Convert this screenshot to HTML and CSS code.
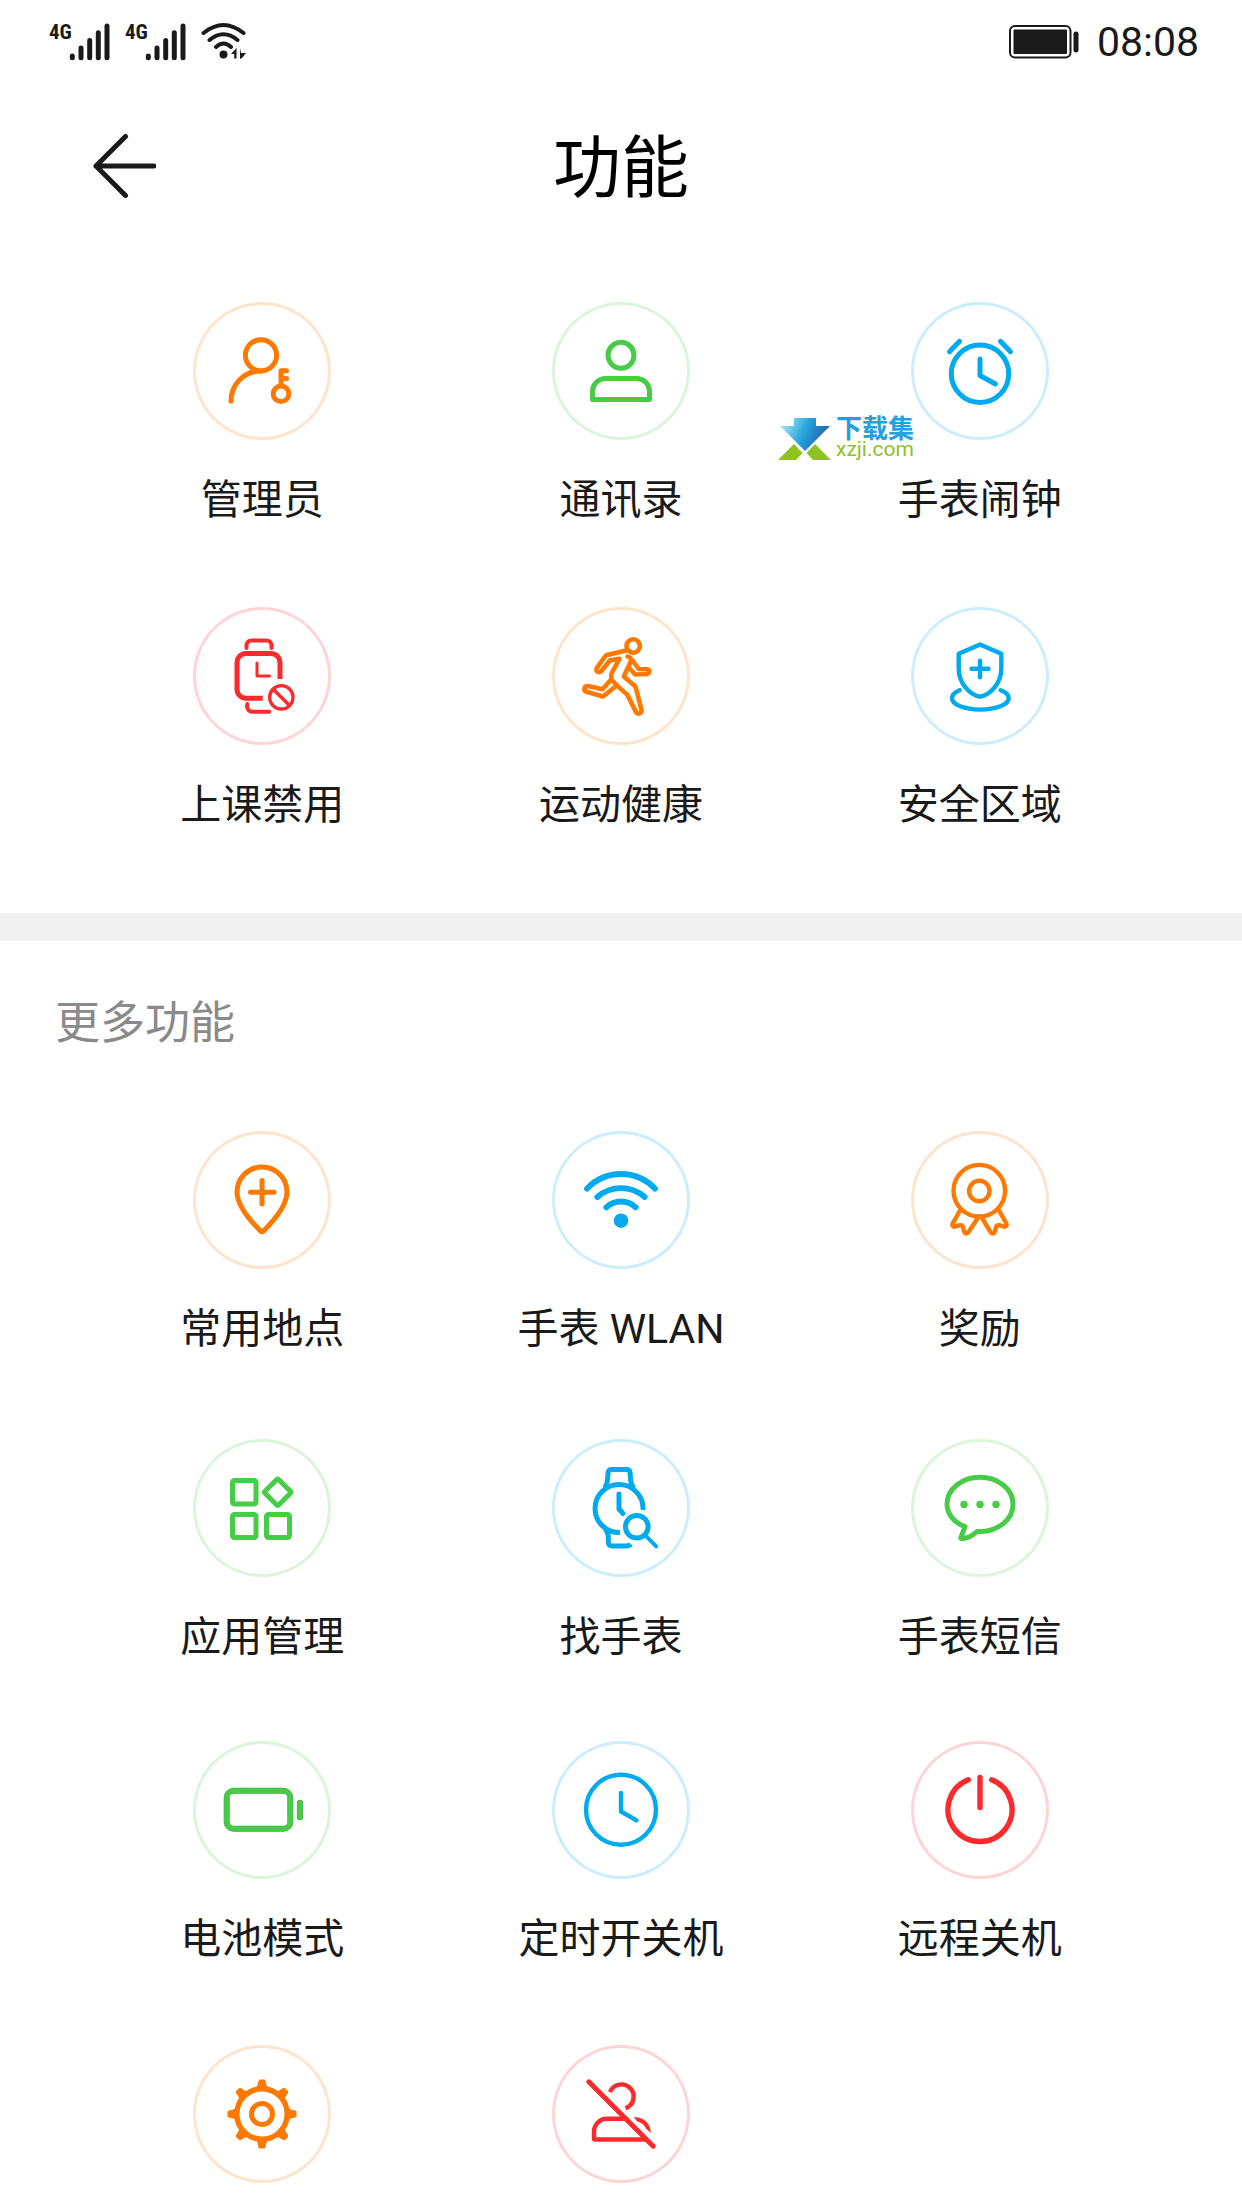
FILE: index.html
```html
<!DOCTYPE html>
<html lang="zh-CN">
<head>
<meta charset="utf-8">
<meta name="viewport" content="width=device-width, initial-scale=1">
<title>功能</title>
<link rel="stylesheet" href="styles.css">
</head>
<body>
<div class="status-bar">
  <div class="status-group">
    <svg class="signal" viewBox="0 0 62 40" role="img" aria-label="4G 信号">
      <text class="signal-text" x="0" y="17">4G</text>
      <path d="M23.3 34v1.7M32 26v9.7M40.7 18.500v17.200M49.300 10.700v25M58 4v31.700"/>
    </svg>
    <svg class="signal" viewBox="0 0 62 40" role="img" aria-label="4G 信号">
      <text class="signal-text" x="0" y="17">4G</text>
      <path d="M23.3 34v1.7M32 26v9.7M40.7 18.500v17.200M49.300 10.700v25M58 4v31.700"/>
    </svg>
    <svg class="wlan" viewBox="0 0 46 40" role="img" aria-label="WLAN">
      <path class="wlan-arc" d="M2.500 11Q22.500-5 42.500 11M8.500 18Q22.500 6.500 36.500 18M15 25Q22.500 18 30 25"/>
      <circle cx="22.500" cy="32.500" r="4"/>
      <path d="M30 32l5.500-6v10.500h-2.300v-4.500zM39 26l1 5h5l-4 5-2 1z"/>
    </svg>
  </div>
  <div class="status-group status-right">
    <svg class="power-level" viewBox="0 0 70 34" role="img" aria-label="电量">
      <rect class="power-case" x="1" y="1" width="60.500" height="31.500" rx="5"/>
      <rect x="4.500" y="4.500" width="53.500" height="24.500" rx="1"/>
      <rect x="64.500" y="6.500" width="5" height="21" rx="2.500"/>
    </svg>
    <time>08:08</time>
  </div>
</div>

<header class="header">
  <button class="back" type="button" aria-label="返回">
    <svg viewBox="0 0 64 64"><path d="M33.500 2.500L4 32l29.500 29.500M4 32h58"/></svg>
  </button>
  <h1 class="title">功能</h1>
</header>

<main>
  <section class="main-features">
    <ul class="grid">
      <li><a class="item orange" href="#admin">
        <svg class="icon" viewBox="0 0 138 138">
          <circle cx="68" cy="53.300" r="15.600"/><path d="M38 99.300C38 82 51 69 68 69M88 81V68.700h5.500M88 76.500h5.500"/><circle cx="88" cy="91.700" r="7.800"/>
        </svg>
        <span class="label">管理员</span></a></li>
      <li><a class="item green" href="#contacts">
        <svg class="icon" viewBox="0 0 138 138">
          <circle cx="69" cy="53.300" r="13"/><path d="M40.500 97.500v-8a13 13 0 0 1 13-13h31a13 13 0 0 1 13 13v8z"/>
        </svg>
        <span class="label">通讯录</span></a></li>
      <li><a class="item blue" href="#alarm">
        <svg class="icon" viewBox="0 0 138 138">
          <circle cx="69" cy="71.700" r="28.700"/><path d="M69 57v16.500l15.400 8.500M38.500 49.700l10-10.400M99.500 49.700l-10-10.400"/>
        </svg>
        <span class="label">手表闹钟</span></a></li>
      <li><a class="item red" href="#class-mode">
        <svg class="icon" viewBox="0 0 138 138">
          <path stroke-width="4" d="M53.500 41v-2.500a5 5 0 0 1 5-5h15a5 5 0 0 1 5 5V41M54.200 97v2.700a5 5 0 0 0 5 5h17"/>
          <path class="flat" d="M87 72V56a9 9 0 0 0-9-9.500H53a9 9 0 0 0-9 9.500v26a9 9 0 0 0 9 9.300h16.700"/>
          <path stroke-width="3" d="M64 56v13h12.500"/>
          <circle stroke-width="3.300" cx="88.300" cy="90.300" r="11.700"/><path stroke-width="3.300" d="M80.500 82.500l16 16"/>
        </svg>
        <span class="label">上课禁用</span></a></li>
      <li><a class="item orange" href="#sport">
        <svg class="icon" viewBox="0 0 138 138">
          <g stroke-width="4.600">
            <circle cx="81.200" cy="39" r="6.700"/>
            <path d="M74 43.500L55 48q-1.300.4-2 1.500L44.800 61q-1 2.500.8 3.800 2 1 3.600-.6l8.800-10.900 9.500-1.600L59.500 66.500l-.3 6-8.700 9.800-14.500-3.200q-3-.3-3.600 2.300-.4 2.400 2.100 3.400L51 89.500l11.500-9.300M59.200 72.500q9 9.500 16 15l9 18q1.600 1.800 3.600.8 2.200-1.300 1.700-3.300l-6-23.500-11.700-10L78.500 55q1.500-5-3-5.500M80.500 53.500L86.800 62l8.200.2q2.200.3 2.200 2.300t-2.300 2.500l-11.700.5-5-5.500"/>
          </g>
        </svg>
        <span class="label">运动健康</span></a></li>
      <li><a class="item blue" href="#safe-zone">
        <svg class="icon" viewBox="0 0 138 138">
          <g stroke-width="4.400">
            <path d="M69 37.500l21.300 9.200v15C90.300 75 80.500 87.500 69 89.700 57.500 87.500 47.700 75 47.700 61.700v-15zM69 53.700v16.600M60.500 61.800h17"/>
            <path d="M48.700 83.300C43.500 85.300 41 88 41 91.300c0 6.300 12.500 11.300 28.300 11.300s28.400-5 28.400-11.300c0-3.300-2.700-6-8-8"/>
          </g>
        </svg>
        <span class="label">安全区域</span></a></li>
    </ul>
  </section>

  <section class="more-features">
    <h2 class="section-title">更多功能</h2>
    <ul class="grid">
      <li><a class="item orange" href="#places">
        <svg class="icon" viewBox="0 0 138 138">
          <path d="M67.500 100C57 89.500 44 74 44 61a25 25 0 0 1 50 0c0 13-13 28.500-23.500 39q-1.500 1.200-3 0zM69 49.500v23.500M57.500 61.200h23.500"/>
        </svg>
        <span class="label">常用地点</span></a></li>
      <li><a class="item blue" href="#wlan">
        <svg class="icon" viewBox="0 0 138 138">
          <path stroke-width="5.800" d="M35 57.700a46.700 46.700 0 0 1 68 0M45.300 66a36 36 0 0 1 47.400 0M54.300 76.300a21.500 21.500 0 0 1 29.400 0"/><circle class="solid" cx="69" cy="89.700" r="7.200"/>
        </svg>
        <span class="label">手表 WLAN</span></a></li>
      <li><a class="item orange" href="#rewards">
        <svg class="icon" viewBox="0 0 138 138">
          <g stroke-width="4.400">
            <circle cx="68.300" cy="59.700" r="25.800"/><circle cx="68.300" cy="60" r="10.200"/>
            <path d="M49 79.500l-7.300 12.800q-1.400 3.700 2 3.400l5.500-1.600q2-.2 2.600 1.700l1.500 5.200q1.800 3 4 .3L67.500 86M88 79.500l7.300 12.800q1.400 3.700-2 3.400l-5.500-1.600q-2-.2-2.600 1.700l-1.500 5.200q-1.800 3-4 .3L70.500 86"/>
          </g>
        </svg>
        <span class="label">奖励</span></a></li>
      <li><a class="item green" href="#apps">
        <svg class="icon" viewBox="0 0 138 138">
          <rect x="39.500" y="41.500" width="23.500" height="23.500" rx="2"/><rect x="39.500" y="75.500" width="23.500" height="23" rx="2"/><rect x="73.500" y="75.500" width="23" height="23" rx="2"/>
          <path d="M83.800 40.500l-12 12q-.8.800 0 1.600l12 12q.9.800 1.800 0l12-12q.8-.8 0-1.600l-12-12q-.9-.8-1.800 0z"/>
        </svg>
        <span class="label">应用管理</span></a></li>
      <li><a class="item blue" href="#find">
        <svg class="icon" viewBox="0 0 138 138">
          <path class="flat" d="M91 71A24 24 0 1 0 68 93.500"/>
          <path class="flat" d="M52.500 49q2.700-3.500 3-8l.5-7q.3-3.500 3.800-3.500h14.500q3.500 0 3.800 3.500l.5 7q.3 4.500 3 8M52.800 90q3.200 2.500 3.500 7v6q.2 4 4 4h13.500q3.500 0 5-1.800"/>
          <path d="M67 55v15l4 4.500"/>
          <circle cx="84.800" cy="87.700" r="11.300"/><path stroke-width="4" d="M94.500 97.700l9.700 9.600"/>
        </svg>
        <span class="label">找手表</span></a></li>
      <li><a class="item green" href="#messages">
        <svg class="icon" viewBox="0 0 138 138">
          <path d="M54 87.700C43 83.500 36 75 36 65.300 36 50 51 38.200 69 38.200s33 11.800 33 27.100-15 27.200-33 27.200h-3c-4 4-9 6.500-15 7.300q-1.700 0-1-1.500z"/>
          <g class="solid"><circle cx="53" cy="65.500" r="3.700"/><circle cx="69" cy="65.500" r="3.700"/><circle cx="85" cy="65.500" r="3.700"/></g>
        </svg>
        <span class="label">手表短信</span></a></li>
      <li><a class="item green" href="#battery">
        <svg class="icon" viewBox="0 0 138 138">
          <rect class="edge" x="33.700" y="49.800" width="63.600" height="38" rx="7"/><rect x="33.700" y="49.800" width="63.600" height="38" rx="7"/>
          <path class="edge" d="M106.900 61.700v14.600"/><path d="M106.900 61.700v14.600"/>
        </svg>
        <span class="label">电池模式</span></a></li>
      <li><a class="item blue" href="#schedule">
        <svg class="icon" viewBox="0 0 138 138">
          <g stroke-width="4.400"><circle cx="69" cy="68.700" r="35"/><path d="M69 52v18.500l15.500 8.800"/></g>
        </svg>
        <span class="label">定时开关机</span></a></li>
      <li><a class="item red" href="#shutdown">
        <svg class="icon" viewBox="0 0 138 138">
          <path stroke-width="5.400" d="M57.300 38.700a32 32 0 1 0 23.400 0M69 36.500v30"/>
        </svg>
        <span class="label">远程关机</span></a></li>
      <li><a class="item orange" href="#settings" aria-label="设置">
        <svg class="icon" viewBox="0 0 138 138">
          <circle stroke-width="5.400" cx="69" cy="69" r="25.200"/><circle cx="69" cy="69" r="10.500"/>
          <g class="solid">
            <path id="tooth" d="M62 43.500q2.500-1 3.200-6.500.3-2.500 1.500-2.500h4.600q1.200 0 1.500 2.500.7 5.500 3.200 6.500z"/>
            <use href="#tooth" transform="rotate(45 69 69)"/><use href="#tooth" transform="rotate(90 69 69)"/><use href="#tooth" transform="rotate(135 69 69)"/><use href="#tooth" transform="rotate(180 69 69)"/><use href="#tooth" transform="rotate(225 69 69)"/><use href="#tooth" transform="rotate(270 69 69)"/><use href="#tooth" transform="rotate(315 69 69)"/>
          </g>
        </svg></a></li>
      <li><a class="item red" href="#block" aria-label="拒接陌生人">
        <svg class="icon" viewBox="0 0 138 138">
          <path d="M36.800 36.800l64.400 64.400"/>
          <g stroke-width="4.400">
            <path class="flat" d="M58 47a12.300 12.300 0 1 1 15.500 16.300"/>
            <path d="M74.500 73.700H55a13 13 0 0 0-13 13v7q0 .8.800.8h51.500"/>
          </g>
          <path class="solid" d="M81.500 72.200c10-.8 17.300 6 17.400 15.800l-5-4.500c-1.500-3.500-4.500-6-8.500-7z"/>
        </svg></a></li>
    </ul>
  </section>
</main>

<div class="watermark">
  <svg class="watermark-logo" viewBox="0 0 53 42" aria-hidden="true">
    <defs><linearGradient id="arrow" x1="0" y1="0.200" x2="1" y2="0.500"><stop offset="0.050" stop-color="#a5e0f5"/><stop offset="0.500" stop-color="#25a5de"/><stop offset="1" stop-color="#2a55a5"/></linearGradient></defs>
    <path fill="url(#arrow)" d="M16 0h22v8h14L27 33 2 8h14z"/>
    <path fill="#8fc31f" d="M0 42l16-16 8.500 9-6.500 7zM53 42L37 26l-8.500 9 6.500 7z"/>
  </svg>
  <div class="watermark-text"><span class="watermark-name">下载集</span><span class="watermark-site">xzji.com</span></div>
</div>
</body>
</html>
```
FILE: styles.css
```css
* {
  box-sizing: border-box;
}

body {
  position: relative;
  min-height: 100vh;
  margin: 0;
  background: #fff;
  color: #1a1a1a;
  font-family: Roboto, "Noto Sans CJK SC", "Noto Sans", sans-serif;
}

ul, h1, h2 {
  margin: 0;
  padding: 0;
}

/* Status bar */
.status-bar {
  display: flex;
  justify-content: space-between;
  align-items: center;
  height: 83px;
  padding: 0 43px 0 49px;
}

.status-group {
  display: flex;
  align-items: center;
  gap: 14px;
}

.status-right {
  gap: 18px;
}

.signal {
  width: 62px;
  height: 40px;
  fill: none;
  stroke: #1a1a1a;
  stroke-width: 5;
  stroke-linecap: round;
}

.signal-text {
  fill: #1a1a1a;
  stroke: none;
  font: bold 21px "Liberation Sans Narrow", "Roboto Condensed", Roboto, sans-serif;
}

.wlan {
  width: 46px;
  height: 40px;
  fill: #1a1a1a;
}

.wlan-arc {
  fill: none;
  stroke: #1a1a1a;
  stroke-width: 4;
  stroke-linecap: round;
}

.power-level {
  width: 70px;
  height: 34px;
  fill: #1a1a1a;
}

.power-case {
  fill: none;
  stroke: #1a1a1a;
  stroke-width: 2;
}

time {
  font-size: 41px;
  line-height: 60px;
}

/* Header */
.header {
  display: grid;
  grid-template-columns: 1fr auto 1fr;
  align-items: center;
  height: 166px;
  padding: 0 92px;
}

.back {
  width: 64px;
  height: 64px;
  padding: 0;
  border: 0;
  background: none;
}

.back svg {
  display: block;
  fill: none;
  stroke: #1a1a1a;
  stroke-width: 5;
  stroke-linecap: round;
  stroke-linejoin: round;
}

.title {
  padding-top: 6px;
  color: #000;
  font-size: 68px;
  font-weight: 400;
  line-height: 100px;
}

/* Feature grids */
.main-features {
  padding: 53px 0 78px;
  border-bottom: 28px solid #f1f1f1;
}

.more-features {
  padding: 51px 0 0;
}

.section-title {
  margin-bottom: 75px;
  padding-left: 55px;
  color: #8a8a8a;
  font-size: 45px;
  font-weight: 400;
  line-height: 64px;
}

.grid {
  display: grid;
  grid-template-columns: repeat(3, 1fr);
  row-gap: 77px;
  padding: 0 83px;
  list-style: none;
}

.more-features .grid {
  grid-template-rows: 308px 302px 304px;
  row-gap: 0;
}

.item {
  display: flex;
  flex-direction: column;
  align-items: center;
  gap: 30px;
  color: #1a1a1a;
  text-decoration: none;
}

.orange {
  --tint: #ff7800;
  --ring: #ffe4cc;
}

.green {
  --tint: #47cc47;
  --ring: #daf5da;
}

.blue {
  --tint: #00aaee;
  --ring: #cceefc;
}

.red {
  --tint: #fa2a2d;
  --ring: #fed4d5;
}

.icon {
  width: 138px;
  height: 138px;
  border-radius: 50%;
  box-shadow: inset 0 0 0 3px var(--ring);
  fill: none;
  stroke: var(--tint);
  stroke-width: 5;
  stroke-linecap: round;
  stroke-linejoin: round;
}

.flat {
  stroke-linecap: butt;
}

.solid {
  fill: var(--tint);
  stroke: none;
}

.edge {
  stroke: #4ba14b;
  stroke-width: 6;
}

.label {
  font-size: 41px;
  line-height: 60px;
  white-space: nowrap;
}

/* Site watermark floating over the page */
.watermark {
  position: absolute;
  top: 418px;
  left: calc(50% + 157px);
  display: flex;
  gap: 5px;
}

.watermark-logo {
  width: 53px;
  height: 42px;
}

.watermark-text {
  display: flex;
  flex-direction: column;
}

.watermark-name {
  color: #25a0da;
  font-size: 26px;
  font-weight: 700;
  line-height: 22px;
}

.watermark-site {
  color: #8fc31f;
  font-size: 21px;
  line-height: 18px;
}
```
